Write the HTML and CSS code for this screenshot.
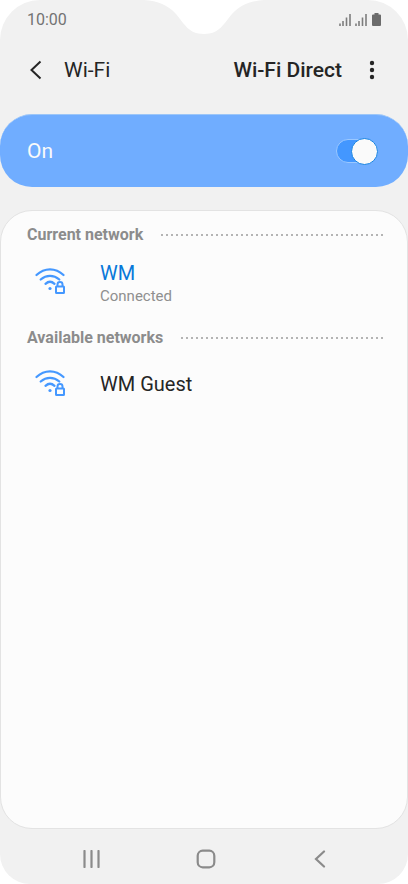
FILE: index.html
```html
<!DOCTYPE html>
<html lang="en">
<head>
<meta charset="utf-8">
<meta name="viewport" content="width=device-width, initial-scale=1">
<title>Wi-Fi</title>
<link rel="stylesheet" href="styles.css">
</head>
<body>
<svg class="symbols" aria-hidden="true">
  <symbol id="wifi-lock" viewBox="0 0 32 28">
    <g fill="none" stroke="#4598ff" stroke-width="2.300" stroke-linecap="round">
      <path d="M2.500 7C10.500 -0.600 21.500 -0.600 29.500 7"/>
      <path d="M6.700 11.500C12.300 6.700 19.700 6.700 25.300 11.500"/>
      <path d="M11.500 15.800C14.300 13.300 17.700 13.300 20.500 15.800"/>
      <rect x="22" y="18.500" width="8" height="6.500" rx="0.500" stroke-width="2"/>
      <path d="M23.500 18V16.500C23.500 13.300 28.500 13.300 28.500 16.500V18" stroke-width="2"/>
    </g>
    <circle cx="16" cy="20.500" r="1.600" fill="#4598ff"/>
  </symbol>
  <symbol id="signal" viewBox="0 0 13 13">
    <path d="M2 10.500V13M5 8V13M8.500 4.500V13M12 1V13" stroke="#7d7d7d" stroke-width="1.600"/>
  </symbol>
</svg>
<div class="phone">
  <svg class="notch" viewBox="0 0 120 35" aria-hidden="true"><path d="M0 0C14 1 24 5 32 14C40 23 44 34 60 34C76 34 80 23 88 14C96 5 106 1 120 0Z" fill="#fff"/></svg>
  <div class="status">
    <span>10:00</span>
    <div class="status-icons">
      <svg width="13" height="13" aria-hidden="true"><use href="#signal"/></svg>
      <svg width="13" height="13" aria-hidden="true"><use href="#signal"/></svg>
      <svg class="battery" width="9" height="13" viewBox="0 0 9 13" aria-hidden="true"><path d="M2.500 0H6.500V1.500H8Q9 1.500 9 2.500V12Q9 13 8 13H1Q0 13 0 12V2.500Q0 1.500 1 1.500H2.500Z" fill="#6b6b6b"/></svg>
    </div>
  </div>
  <header class="header">
    <button class="icon-button" aria-label="Navigate up"><svg width="13" height="20" viewBox="0 0 13 20"><path d="M11.500 1.500L2.500 10L11.500 18.500" fill="none" stroke="#252525" stroke-width="2"/></svg></button>
    <h1>Wi-Fi</h1>
    <button class="direct">Wi-Fi Direct</button>
    <button class="icon-button more" aria-label="More options"><svg width="6" height="20" viewBox="0 0 6 20"><g fill="#252525"><circle cx="3" cy="3" r="2.200"/><circle cx="3" cy="10" r="2.200"/><circle cx="3" cy="17" r="2.200"/></g></svg></button>
  </header>
  <label class="master">
    <span>On</span>
    <input class="switch" type="checkbox" role="switch" checked>
  </label>
  <main class="panel">
    <h2>Current network</h2>
    <button class="network current">
      <svg width="32" height="28" aria-hidden="true"><use href="#wifi-lock"/></svg>
      <span class="network-text"><span class="name">WM</span><span class="detail">Connected</span></span>
    </button>
    <h2>Available networks</h2>
    <button class="network">
      <svg width="32" height="28" aria-hidden="true"><use href="#wifi-lock"/></svg>
      <span class="name">WM Guest</span>
    </button>
  </main>
  <nav class="nav">
    <button class="icon-button" aria-label="Recent apps"><svg width="18" height="18" viewBox="0 0 18 18"><path d="M2.500 1V17M9.500 1V17M16.500 1V17" stroke="#8b8b8b" stroke-width="2.200" stroke-linecap="round"/></svg></button>
    <button class="icon-button" aria-label="Home"><svg width="20" height="20" viewBox="0 0 20 20"><rect x="1.700" y="1.700" width="16.600" height="16.600" rx="5" fill="none" stroke="#8b8b8b" stroke-width="2.200"/></svg></button>
    <button class="icon-button" aria-label="Back"><svg width="18" height="18" viewBox="0 0 18 18"><path d="M12 1.500L4 9L12 16.500" fill="none" stroke="#8b8b8b" stroke-width="2.200" stroke-linecap="round"/></svg></button>
  </nav>
</div>
</body>
</html>
```
FILE: styles.css
```css
* {
  box-sizing: border-box;
}

body {
  margin: 0;
  background: #fff;
  color: #252525;
  font-family: Roboto, "Liberation Sans", sans-serif;
}

button {
  padding: 0;
  border: 0;
  background: none;
  color: inherit;
  font: inherit;
  text-align: left;
}

svg {
  display: block;
  flex: none;
}

.symbols {
  position: absolute;
  width: 0;
  height: 0;
}

.phone {
  position: relative;
  display: flex;
  flex-direction: column;
  min-height: 100vh;
  background: #f1f1f1;
  border-radius: 40px 40px 30px 30px;
}

.notch {
  position: absolute;
  top: 0;
  left: 50%;
  width: 120px;
  height: 35px;
  margin-left: -60px;
}

.status {
  display: flex;
  align-items: center;
  justify-content: space-between;
  height: 38px;
  padding: 0 27px;
  color: #737373;
  font-size: 16px;
}

.status-icons {
  display: flex;
  gap: 3px;
}

.battery {
  margin-left: 2px;
}

.header {
  display: flex;
  align-items: center;
  height: 64px;
  margin-bottom: 12px;
  padding: 0 33px 0 29px;
  font-size: 21px;
}

.header h1 {
  margin: 0 auto 0 22px;
  font-size: 21px;
  font-weight: 400;
}

.direct {
  font-weight: 500;
}

.more {
  margin-left: 27px;
}

.master {
  display: flex;
  align-items: center;
  justify-content: space-between;
  height: 73px;
  margin-bottom: 23px;
  padding: 0 30px 0 27px;
  border-top: 1px solid #9cc6f8;
  border-radius: 32px;
  background: #70adff;
  color: #fafafa;
  font-size: 21px;
}

.switch {
  appearance: none;
  display: flex;
  align-items: center;
  justify-content: flex-end;
  width: 42px;
  height: 24px;
  margin: 0;
  border: 1px solid #9bc8ff;
  border-radius: 12px;
  background: #4397ff;
}

.switch::before {
  content: "";
  flex: none;
  width: 25px;
  height: 25px;
  margin-right: -1px;
  border: 1px solid #1683e2;
  border-radius: 50%;
  background: #fafafa;
}

.panel {
  flex: 1;
  padding: 14px 24px 24px 26px;
  border: 1px solid #e3e3e3;
  border-radius: 32px;
  background: #fcfcfc;
}

.panel h2 {
  display: flex;
  align-items: center;
  gap: 16px;
  margin: 0;
  color: #8c8c8c;
  font-size: 16px;
  font-weight: 700;
  line-height: 20px;
}

.panel h2::after {
  content: "";
  flex: 1;
  height: 2px;
  background: repeating-linear-gradient(to left, #b4b4b4 0 2px, transparent 2px 5px);
}

.network {
  display: flex;
  align-items: center;
  gap: 34px;
  width: 100%;
  height: 72px;
  padding-left: 7px;
  font-size: 20px;
}

.current {
  height: 83px;
  padding-bottom: 10px;
}

.network-text {
  display: flex;
  flex-direction: column;
  padding-top: 3px;
}

.name {
  line-height: 26px;
}

.current .name {
  color: #0878d9;
}

.detail {
  color: #8f8f8f;
  font-size: 15px;
  line-height: 20px;
}

.nav {
  display: flex;
  align-items: center;
  justify-content: space-between;
  height: 55px;
  padding: 4px 19% 0 20%;
}
```
